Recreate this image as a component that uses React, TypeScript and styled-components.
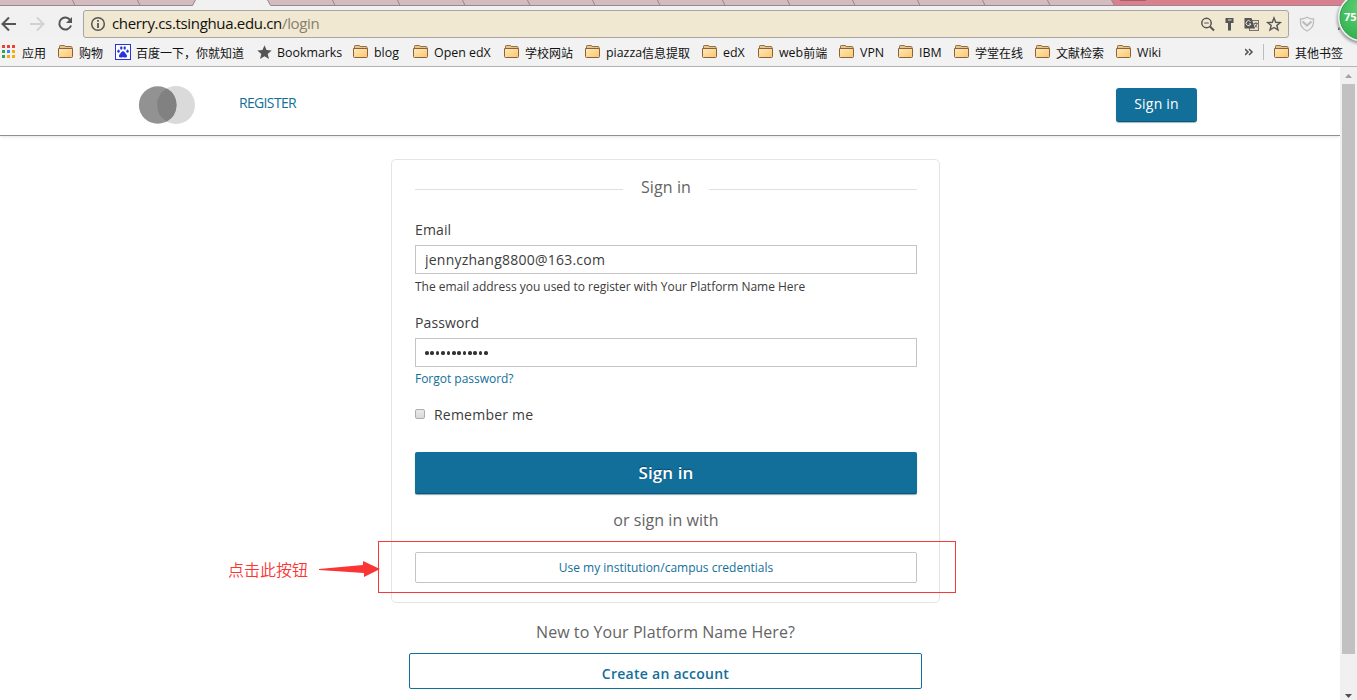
import React from 'react';
import styled, { createGlobalStyle } from 'styled-components';

const Global = createGlobalStyle`
  *, *::before, *::after { box-sizing: border-box; }
  html, body { margin: 0; padding: 0; background: #fff; overflow: hidden; }
  body { font-family: 'Open Sans', 'Noto Sans CJK SC', sans-serif; }
  button, input { font-family: inherit; margin: 0; }
`;

const Screen = styled.div`
  position: relative;
  display: flex;
  flex-direction: column;
  width: 1357px;
  height: 700px;
  overflow: hidden;
`;

const TabStrip = styled.svg`
  display: block;
  flex: none;
`;

const Toolbar = styled.div`
  flex: none;
  display: flex;
  align-items: center;
  height: 32px;
  padding-top: 4px;
  background: #f2f1f2;
`;

const NavIcons = styled.div`
  width: 83px;
  height: 28px;
`;

const AddressBar = styled.div`
  display: flex;
  align-items: center;
  width: 1206px;
  height: 28px;
  border: 1px solid #a9a5a6;
  border-radius: 3px;
  background: #f0e8d0;
`;

const Url = styled.div`
  flex: 1;
  padding: 0 0 2px 6px;
  font-size: 15px;
  line-height: 24px;
  letter-spacing: -0.33px;
  color: #111;
  white-space: nowrap;
  span { color: #85806f; }
`;

const BookmarkBar = styled.div`
  flex: none;
  display: flex;
  height: 29px;
  padding-left: 2px;
  border-bottom: 1px solid #b5b3b5;
  background: #f2f2f2;
`;

const BookmarkItem = styled.div<{ $width: number }>`
  flex: none;
  display: flex;
  align-items: center;
  width: ${(p) => p.$width}px;
  height: 28px;
  font-size: 13px;
  color: #111;
  white-space: nowrap;
`;

const IconSlot = styled.span<{ $width: number }>`
  flex: none;
  display: flex;
  width: ${(p) => p.$width}px;
`;

const Latin = styled.span`
  padding-top: 1px;
  font-size: 12.4px;
  line-height: 28px;
`;

const Han = styled.span`
  padding-top: 1px;
  font: 12px/28px 'Noto Sans CJK SC', sans-serif;
`;

const More = styled.div`
  display: flex;
  align-items: center;
  width: 18px;
  height: 28px;
  margin-left: 48px;
`;

const Divider = styled.div`
  width: 1px;
  height: 16px;
  margin: 6px 10px 0 0;
  background: #bcbcbc;
`;

const Viewport = styled.div`
  flex: 1;
  display: flex;
  min-height: 0;
`;

const Page = styled.div`
  width: 1340px;
  background: #fff;
`;

const Header = styled.header`
  display: flex;
  height: 69px;
  padding: 0 143px 0 138px;
  border-bottom: 1px solid #8f8f8f;
  box-shadow: 0 1px 3px rgba(0, 0, 0, 0.1);
`;

const Logo = styled.svg`
  margin-top: 18px;
`;

const Register = styled.a`
  flex: 1;
  margin: 26px 0 0 43px;
  font-size: 14px;
  line-height: 20px;
  letter-spacing: -0.66px;
  color: #126f9a;
`;

const HeaderButton = styled.button`
  width: 81px;
  height: 34px;
  margin-top: 21px;
  padding: 0 0 2px;
  border: 0;
  border-bottom: 1px solid #0d5679;
  border-radius: 3px;
  background: #126f9a;
  box-shadow: 0 1px 1px rgba(10, 74, 103, 0.4);
  font-size: 14px;
  font-weight: 500;
  letter-spacing: 0.2px;
  color: #fff;
`;

const Main = styled.main`
  display: flex;
  flex-direction: column;
  align-items: center;
  width: 549px;
  margin: 23px 0 0 391px;
`;

const Card = styled.form`
  display: flex;
  flex-direction: column;
  width: 549px;
  height: 444px;
  padding: 0 22px 0 23px;
  border: 1px solid #e4e4e4;
  border-radius: 5px;
`;

const CardTitle = styled.h2`
  display: flex;
  align-items: center;
  justify-content: space-between;
  height: 22px;
  margin: 16px 0 25px;
  font-size: 16px;
  line-height: 22px;
  font-weight: 400;
  letter-spacing: 0.1px;
  color: #646464;
  &::before, &::after {
    content: '';
    width: 208px;
    height: 1px;
    margin-top: 4px;
    background: #e0e0e0;
  }
`;

const Label = styled.label`
  height: 22px;
  font-size: 14px;
  line-height: 14px;
  letter-spacing: 0.12px;
  color: #3c3c3c;
`;

const Field = styled.input`
  width: 502px;
  height: 29px;
  padding: 0 9px 0;
  border: 1px solid #c4c4c4;
  outline: 0;
  background: #fff;
  font-size: 14px;
  letter-spacing: 0.23px;
  color: #3c3c3c;
`;

const Dots = styled.div`
  display: flex;
  align-items: center;
  gap: 1.7px;
  width: 502px;
  height: 29px;
  padding: 1px 9px 0;
  border: 1px solid #c4c4c4;
`;

const Dot = styled.i`
  width: 3.7px;
  height: 3.7px;
  border-radius: 50%;
  background: #333;
`;

const Help = styled.div`
  height: 42px;
  padding-top: 4px;
  font-size: 12px;
  line-height: 18px;
  letter-spacing: -0.02px;
  color: #3c3c3c;
`;

const Forgot = styled(Help)`
  height: 41px;
  padding-top: 3px;
  color: #126f9a;
`;

const Remember = styled.label`
  display: flex;
  align-items: center;
  gap: 9px;
  height: 14px;
  font-size: 14px;
  line-height: 14px;
  color: #3c3c3c;
  letter-spacing: 0.22px;
`;

const Check = styled.span`
  width: 10px;
  height: 10px;
  margin-bottom: 2px;
  border: 1px solid #adadad;
  border-radius: 2px;
  background: linear-gradient(#eaeaea, #d9d9d9);
`;

const SubmitButton = styled.button`
  width: 502px;
  height: 42px;
  margin: 30px 0 15px;
  padding: 0;
  border: 0;
  border-bottom: 1px solid #0d5679;
  border-radius: 2px;
  background: #126f9a;
  box-shadow: 0 1px 1px rgba(10, 74, 103, 0.5);
  font-size: 17px;
  font-weight: 600;
  letter-spacing: 0.1px;
  color: #fff;
  text-shadow: 0 -1px 1px #07476a;
`;

const Caption = styled.p<{ $below: number }>`
  height: 22px;
  margin: 0 0 ${(p) => p.$below}px;
  font-size: 16px;
  line-height: 22px;
  letter-spacing: 0.06px;
  text-align: center;
  color: #646464;
`;

const CampusButton = styled.button`
  width: 502px;
  height: 31px;
  padding: 0;
  border: 1px solid #c4c4c4;
  border-radius: 2px;
  background: #fff;
  font-size: 12px;
  color: #126f9a;
`;

const SignUp = styled.section`
  display: flex;
  flex-direction: column;
  margin-top: 18px;
`;

const AccountButton = styled.button`
  width: 513px;
  height: 36px;
  padding: 5px 0 0;
  border: 1px solid #126f9a;
  border-radius: 2px;
  background: #fff;
  font-size: 14px;
  font-weight: 550;
  letter-spacing: 0.26px;
  color: #126f9a;
`;

const ScrollBar = styled.div`
  display: flex;
  flex-direction: column;
  align-items: center;
  width: 17px;
  background: #f0f0f0;
`;

const Thumb = styled.div`
  width: 13px;
  height: 570px;
  background: #c1c1c1;
`;

const Highlight = styled.div`
  position: absolute;
  left: 378px;
  top: 541px;
  width: 578px;
  height: 52px;
  border: 1px solid #f93838;
`;

const Note = styled.div`
  position: absolute;
  left: 228px;
  top: 557px;
  font: 350 16px/24px 'Noto Sans CJK SC', sans-serif;
  color: #fb3434;
`;

const Arrow = styled.svg`
  position: absolute;
  left: 318px;
  top: 558px;
`;

const Badge = styled.svg`
  position: absolute;
  right: 0;
  top: 0;
`;

const Folder = () => (
  <svg width="16" height="14" viewBox="0 0 16 14">
    <defs>
      <linearGradient id="folder" x1="0" y1="0" x2="1" y2="1">
        <stop offset="0" stopColor="#ffeab8" />
        <stop offset="1" stopColor="#fbc670" />
      </linearGradient>
    </defs>
    <path d="M1.500 3.500V1.200Q1.500 .5 2.200 .5H6.300Q7 .5 7.200 1.500H13.300Q14 1.500 14 2.500V4" fill="#e8c58e" stroke="#927048" />
    <path d="M.5 3.500H14.500V11.500Q14.500 12.500 13.500 12.500H1.500Q.5 12.500 .5 11.500Z" fill="url(#folder)" stroke="#8c6239" />
  </svg>
);

const Apps = () => (
  <svg width="14" height="14" shapeRendering="crispEdges">
    {['#ea4335', '#ea4335', '#ea4335', '#34a058', '#4285f4', '#fbab08', '#34a058', '#fbab08', '#fbab08'].map((c, i) => (
      <rect key={i} x={(i % 3) * 5} y={Math.floor(i / 3) * 5} width="3" height="3" fill={c} />
    ))}
  </svg>
);

const Paw = () => (
  <svg width="16" height="16">
    <rect x=".5" y=".5" width="15" height="15" fill="#fff" stroke="#2932e1" />
    <g fill="#2932e1">
      <ellipse cx="3.500" cy="7.200" rx="1.200" ry="1.600" />
      <ellipse cx="6.300" cy="4" rx="1.200" ry="1.700" />
      <ellipse cx="9.700" cy="4" rx="1.200" ry="1.700" />
      <ellipse cx="12.500" cy="7.200" rx="1.200" ry="1.600" />
      <path d="M8 7.200C9.600 7.200 10 9 11.200 10.200C12.700 11.700 12 13.500 10.400 13.500C9.300 13.500 9 13.200 8 13.200S6.700 13.500 5.600 13.500C4 13.500 3.300 11.700 4.800 10.200C6 9 6.400 7.200 8 7.200Z" />
    </g>
  </svg>
);

const Star = () => (
  <svg width="15" height="14" viewBox="0 0 15 14">
    <path d="M7.500 .3L9.500 5.100L14.700 5.500L10.700 8.900L12 14L7.500 11.200L3 14L4.300 8.900L.3 5.500L5.500 5.100Z" fill="#555" />
  </svg>
);

type Kind = 'apps' | 'paw' | 'star' | 'folder';
const icons: Record<Kind, React.FC> = { apps: Apps, paw: Paw, star: Star, folder: Folder };

const bookmarks: { label: string; width: number; kind: Kind }[] = [
  { label: '应用', width: 56, kind: 'apps' },
  { label: '购物', width: 57, kind: 'folder' },
  { label: '百度一下，你就知道', width: 142, kind: 'paw' },
  { label: 'Bookmarks', width: 96, kind: 'star' },
  { label: 'blog', width: 60, kind: 'folder' },
  { label: 'Open edX', width: 91, kind: 'folder' },
  { label: '学校网站', width: 81, kind: 'folder' },
  { label: 'piazza信息提取', width: 117, kind: 'folder' },
  { label: 'edX', width: 56, kind: 'folder' },
  { label: 'web前端', width: 81, kind: 'folder' },
  { label: 'VPN', width: 59, kind: 'folder' },
  { label: 'IBM', width: 56, kind: 'folder' },
  { label: '学堂在线', width: 81, kind: 'folder' },
  { label: '文献检索', width: 81, kind: 'folder' },
  { label: 'Wiki', width: 81, kind: 'folder' },
];

const Bookmark = ({ label, width, kind }: { label: string; width: number; kind: Kind }) => {
  const Icon = icons[kind];
  const runs = label.match(/[\x20-\x7e]+|[^\x20-\x7e]+/g) ?? [];
  return (
    <BookmarkItem $width={width}>
      <IconSlot $width={kind === 'apps' || kind === 'star' ? 20 : 21}><Icon /></IconSlot>
      {runs.map((r) => (/[a-z]/i.test(r) ? <Latin key={r}>{r}</Latin> : <Han key={r}>{r}</Han>))}
    </BookmarkItem>
  );
};

const tabEdges = [72, 137, 332, 397, 462, 527, 592, 657, 722, 787, 852, 917, 982, 1047];

export default function App() {
  return (
    <Screen>
      <Global />
      <TabStrip width="1357" height="6">
        <rect width="1357" height="6" fill="#d2bcbf" />
        <path d="M1111 0H1357V6H1115Z" fill="#da7f8e" />
        <path d="M1119 0H1147L1145 1H1121Z" fill="#a55f6a" />
        <path d="M0 5.500H1357" stroke="#9c858b" />
        {tabEdges.map((x) => <path key={x} d={`M${x} -1L${x + 3} 5.500`} stroke="#9c858b" fill="none" />)}
        <path d="M1111 -1L1114.500 5.500" stroke="#9c858b" />
        <path d="M192.500 6L196 -1H267L271 6Z" fill="#f2f1f2" />
        <path d="M192.500 5.500L196 -1M267 -1L270.500 5.500" stroke="#9c858b" />
      </TabStrip>
      <Toolbar>
        <NavIcons>
          <svg width="83" height="28" fill="none" strokeWidth="2">
            <path d="M16 14H3M9 7.500L2.500 14L9 20.500" stroke="#555" />
            <path d="M30 14H43M37 7.500L43.500 14L37 20.500" stroke="#d2d2d2" />
            <path d="M70.300 10.200A6 6 0 1 0 71 15.500" stroke="#555" />
            <path d="M72 7V13H66Z" fill="#555" />
          </svg>
        </NavIcons>
        <AddressBar>
          <svg width="22" height="26" fill="none" stroke="#555">
            <circle cx="14" cy="13" r="6.300" strokeWidth="1.500" />
            <path d="M14 12V17M14 9V10.800" strokeWidth="1.800" />
          </svg>
          <Url>cherry.cs.tsinghua.edu.cn<span>/login</span></Url>
          <svg width="87" height="26" fill="none" stroke="#555">
            <circle cx="5.500" cy="12" r="4.700" strokeWidth="1.500" />
            <path d="M9 15.500L13 19.500" strokeWidth="2" />
            <path d="M3.200 12H7.800" />
            <path d="M24.500 7H32.500V12H30V19.500H27V12H24.500Z" fill="#555" stroke="none" />
            <path d="M27 9H30.500" stroke="#f0e8d0" />
            <rect x="48.500" y="9.500" width="9" height="10" fill="#e9e1ce" stroke="#77736b" />
            <path d="M43.500 7H50.500L54 17.500H43.500Z" fill="#555" stroke="none" />
            <path d="M49.500 10.500A2.500 2.500 0 1 0 50 13H48" stroke="#f0e8d0" />
            <path d="M52.500 12.500H57M55 11V12.500M56 13Q55.500 15.500 53.500 16.500M53.500 13.500L56 16.500" strokeWidth=".8" />
            <path d="M73 7L74.700 11.300L79.300 11.600L75.800 14.500L77 19L73 16.500L69 19L70.200 14.500L66.700 11.600L71.300 11.300Z" strokeWidth="1.400" />
          </svg>
        </AddressBar>
        <svg width="68" height="28" fill="none" stroke="#bcbcbc">
          <path d="M11.500 9Q15 9 18 7.200Q21 9 24.500 9V13Q24 18 18 21Q12 18 11.500 13Z" strokeWidth="1.300" />
          <path d="M13.500 11.500L18 15.500L22.500 11.500" strokeWidth="2.200" />
          <path d="M49 17.500H51V20H49Z" fill="#555" stroke="none" />
        </svg>
      </Toolbar>
      <BookmarkBar>
        {bookmarks.map((b) => <Bookmark key={b.label} {...b} />)}
        <More>
          <svg width="10" height="8" fill="none" stroke="#555" strokeWidth="1.600">
            <path d="M0 1L3 4L0 7M4 1L7 4L4 7" />
          </svg>
        </More>
        <Divider />
        <Bookmark label="其他书签" width={80} kind="folder" />
      </BookmarkBar>
      <Viewport>
        <Page>
          <Header>
            <Logo width="58" height="40">
              <circle cx="38" cy="20" r="19" fill="#dadada" />
              <circle cx="19.700" cy="20" r="18.800" fill="#929292" />
              <path d="M28.800 3.500A18.900 18.900 0 0 1 28.800 36.500A18.900 18.900 0 0 1 28.800 3.500Z" fill="#818181" />
            </Logo>
            <Register>REGISTER</Register>
            <HeaderButton>Sign in</HeaderButton>
          </Header>
          <Main>
            <Card onSubmit={(e) => e.preventDefault()}>
              <CardTitle>Sign in</CardTitle>
              <Label>Email</Label>
              <Field defaultValue="jennyzhang8800@163.com" />
              <Help>The email address you used to register with Your Platform Name Here</Help>
              <Label>Password</Label>
              <Dots>{Array.from({ length: 12 }, (_, i) => <Dot key={i} />)}</Dots>
              <Forgot>Forgot password?</Forgot>
              <Remember><Check />Remember me</Remember>
              <SubmitButton>Sign in</SubmitButton>
              <Caption $below={21}>or sign in with</Caption>
              <CampusButton type="button">Use my institution/campus credentials</CampusButton>
            </Card>
            <SignUp>
              <Caption $below={10}>New to Your Platform Name Here?</Caption>
              <AccountButton>Create an account</AccountButton>
            </SignUp>
          </Main>
        </Page>
        <ScrollBar>
          <svg width="17" height="17"><path d="M5 11H12L8.500 7Z" fill="#a3a3a3" /></svg>
          <Thumb />
          <svg width="17" height="46"><path d="M5 40H12L8.500 44Z" fill="#505050" /></svg>
        </ScrollBar>
      </Viewport>
      <Highlight />
      <Note>点击此按钮</Note>
      <Arrow width="64" height="24">
        <path d="M1 11L45 7V3L62 11L46 19V15L1 12Z" fill="#fb3434" />
      </Arrow>
      <Badge width="24" height="50">
        <defs>
          <radialGradient id="ball" cx="50%" cy="30%" r="65%">
            <stop offset="0" stopColor="#62cf78" />
            <stop offset="1" stopColor="#35b552" />
          </radialGradient>
          <filter id="soft" x="-30%" y="-30%" width="160%" height="160%"><feGaussianBlur stdDeviation="1.500" /></filter>
        </defs>
        <circle cx="29" cy="19" r="25" fill="#999" filter="url(#soft)" />
        <circle cx="29" cy="17.500" r="24" fill="#f3f3f3" />
        <circle cx="29" cy="17.500" r="22" fill="url(#ball)" stroke="#289b46" />
        <text x="11" y="21" fill="#fff" fontFamily="Open Sans, sans-serif" fontSize="11" fontWeight="700">75</text>
      </Badge>
    </Screen>
  );
}
